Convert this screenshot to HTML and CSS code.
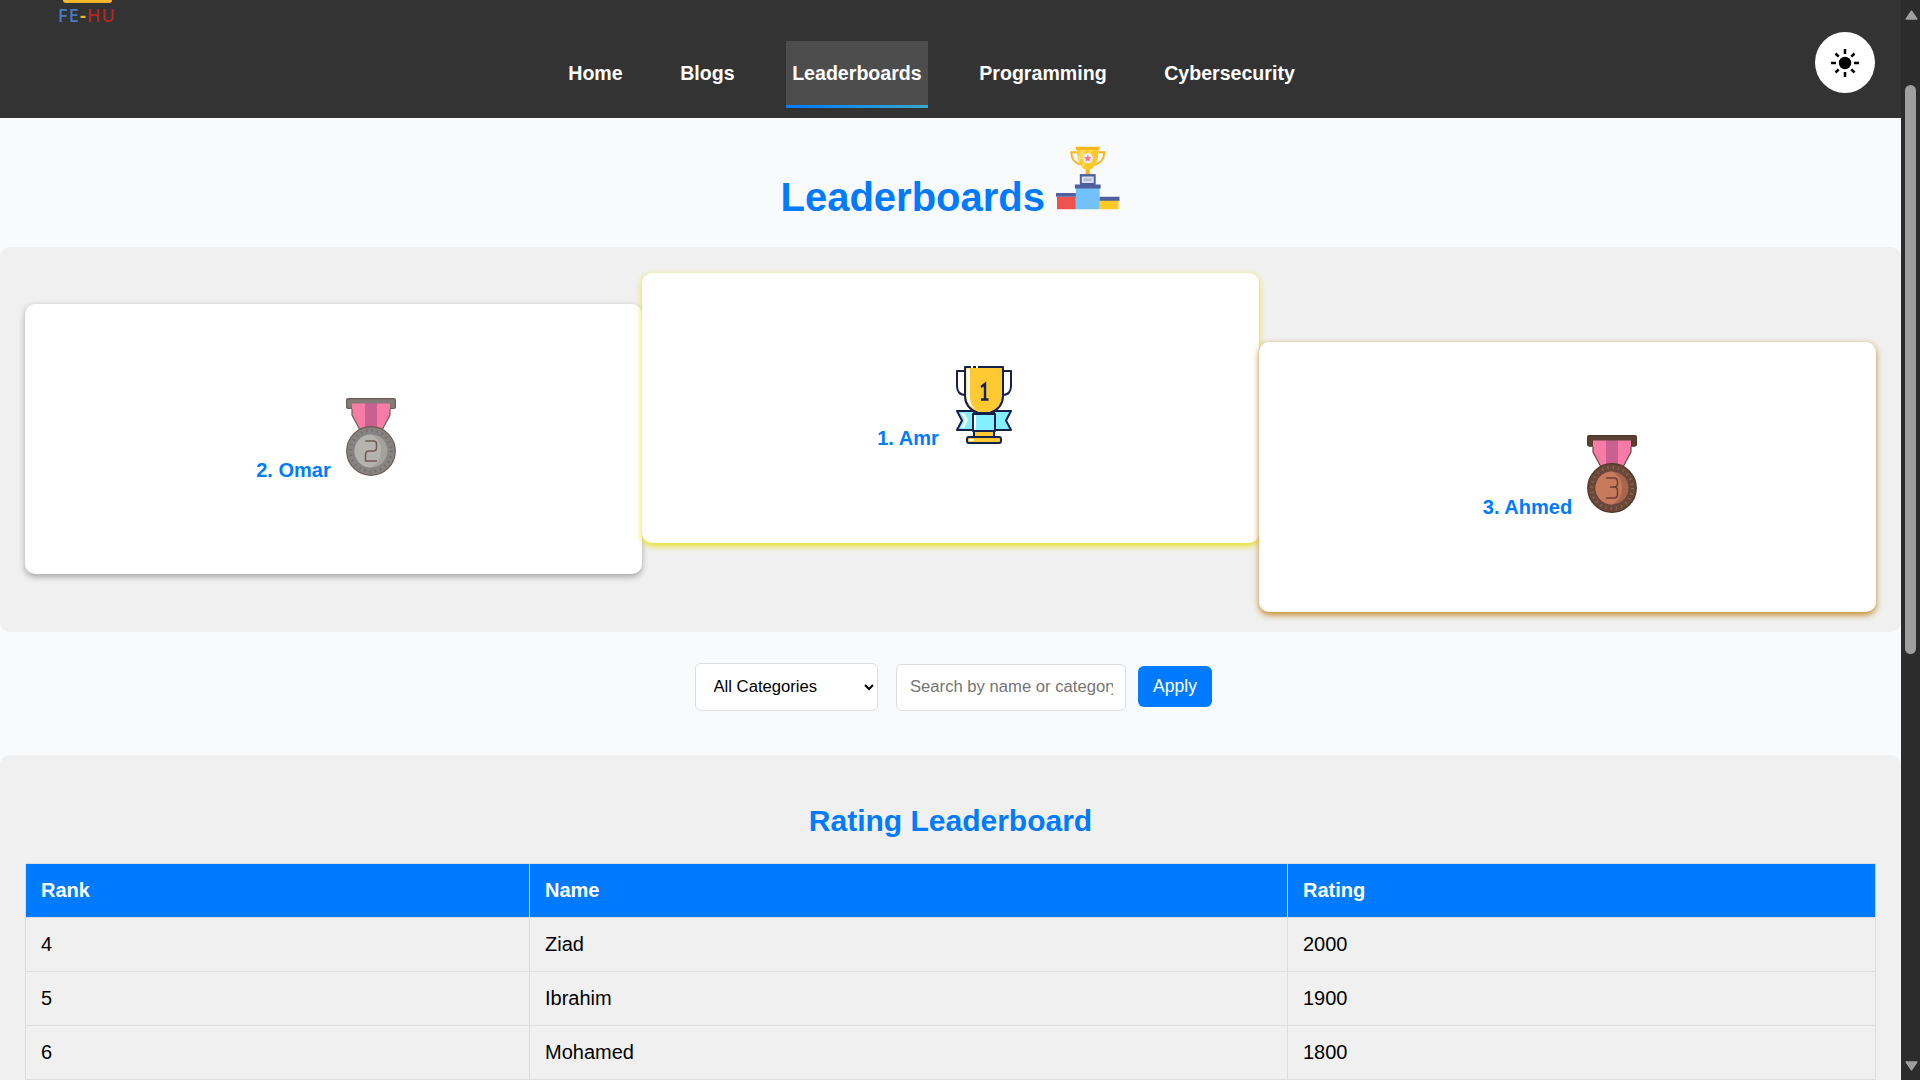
FILE: index.html
```html
<!DOCTYPE html>
<html lang="en">
<head>
<meta charset="utf-8">
<title>Leaderboards</title>
<link rel="stylesheet" href="styles.css">
</head>
<body>
<div class="page">
  <header class="header">
    <a class="logo"><span class="logo-bar"></span><span class="logo-text"><span class="logo-fe">FE</span><span class="logo-dash">-</span><span class="logo-hu">HU</span></span></a>
    <nav class="nav">
      <a class="nav-link">Home</a>
      <a class="nav-link">Blogs</a>
      <a class="nav-link active">Leaderboards</a>
      <a class="nav-link">Programming</a>
      <a class="nav-link">Cybersecurity</a>
    </nav>
    <button class="theme" aria-label="Theme">
      <svg width="30" height="30" viewBox="0 0 30 30"><circle cx="15" cy="15" r="6.2"/><g stroke="#000" stroke-width="2.5"><path d="M15 1v5M15 24v5M1 15h5M24 15h5M5.5 5.5l3.2 3.2M21.3 21.3l3.2 3.2M5.5 24.5l3.2-3.2M21.3 8.7l3.2-3.2"/></g></svg>
    </button>
  </header>

  <h1 class="title"><span>Leaderboards</span>
    <svg class="title-icon" width="63.5" height="64" viewBox="0 0 64 64">
      <path d="M21 6h-5.500c0 7 4 11.500 9.500 12.500M43 6h5.500c0 7-4 11.500-9.500 12.500" fill="none" stroke="#fbb41a" stroke-width="2"/>
      <path d="M30 23h4v6h-4z" fill="#fbb41a"/>
      <path d="M21 2h22c0 10-2 18-9 22h-4c-7-4-9-12-9-22z" fill="#ffc928"/>
      <path d="M26 2h5l-7 14-2-5zM38 2l-11 20-2-2L35 2z" fill="#ffdc62"/>
      <path d="M20 .5h24v3H20z" fill="#fbb41a"/>
      <circle cx="32" cy="12" r="5.200" fill="#eeeafa"/>
      <path d="M32 8.500l1.100 2.300 2.500.3-1.800 1.800.4 2.500-2.200-1.200-2.200 1.200.4-2.500-1.800-1.800 2.500-.3z" fill="#f47a82"/>
      <path d="M24 28h16v12H24z" fill="#505f9e"/><path d="M26 30.500h12v6.500H26z" fill="#dcdff5"/><path d="M28 32.500h8v2.500h-8z" fill="#aeb6e0"/>
      <path d="M1 51h19v12.500H1z" fill="#f0524d"/><path d="M44 54h19v9.500H44z" fill="#ffc928"/><path d="M20 41h24v22.500H20z" fill="#73c1fb"/>
      <path d="M0 47h20v4H0zM44 51h20v4H44zM19 38.500h26v4H19z" fill="#505f9e"/>
    </svg>
  </h1>

  <section class="podium">
    <article class="card second"><span>2. Omar</span>
      <svg width="50" height="78" viewBox="0 0 50 78">
        <path d="M6 5h38v12l-9 17H15L6 17z" fill="#f67ca6" stroke="#6d5a55" stroke-width="1.200"/>
        <path d="M19 5h12v26H19z" fill="#c9608f"/>
        <rect x=".6" y=".6" width="48.800" height="9.800" rx="1.500" fill="#827b78" stroke="#6d5a55" stroke-width="1.200"/>
        <path d="M6 5.500h13V11H6zM31 5.500h13V11H31z" fill="#f67ca6"/><path d="M19 5.500h12V11H19z" fill="#c9608f"/>
        <circle cx="25" cy="53" r="24.300" fill="#858482" stroke="#6d5a55" stroke-width="1.200"/>
        <circle cx="25" cy="53" r="20.500" fill="none" stroke="#6f6d6b" stroke-width="3" stroke-dasharray="1.200 4.167"/>
        <circle cx="25" cy="53" r="16.500" fill="#a3a29d"/><path d="M25 36.500a16.500 16.500 0 0 0 0 33q10-5 10-16.500t-10-16.500z" fill="#b4b3af"/>
        <path d="M19.500 43h8q3 0 3 3v4q0 3-3 3h-4q-4 0-4 4v6h11.500" fill="none" stroke="#705a51" stroke-width="1.500"/>
      </svg>
    </article>
    <article class="card first"><span>1. Amr</span>
      <svg width="56" height="78" viewBox="0 0 56 78">
        <g stroke="#15214d" stroke-width="2" stroke-linejoin="round">
          <path d="M9 5H1v15q0 9 9 9M47 5h8v15q0 9-9 9" fill="#fff"/>
          <path d="M1 45h17v19H1l5-9.500zM55 45H38v19h17l-5-9.500z" fill="#83efff"/>
          <path d="M9 1h38v29q0 12-13 17H22Q9 42 9 30z" fill="#ffc934"/>
          <path d="M17 48h22v17H17z" fill="#83efff"/>
          <path d="M18 65h20v7H18z" fill="#ffc934"/><rect x="11" y="71" width="34" height="6" rx="2" fill="#ffc934"/>
        </g>
        <path d="M10.500 2.500H14V31q0 8 6 13-9.500-5-9.500-14zM18 49h2v15h-2zM13 73h5v2h-5zM5 47h3l4 7-4 8H5l4-7.500z" fill="#fff"/>
        <path d="M15 0h2v2h-2zM20 0h2v2h-2z" fill="#fff"/>
        <path d="M25 21l4-3v15M25 33.500h7.500" fill="none" stroke="#15214d" stroke-width="2.400"/>
      </svg>
    </article>
    <article class="card third"><span>3. Ahmed</span>
      <svg width="50" height="78" viewBox="0 0 50 78">
        <path d="M6 5h38v12l-9 17H15L6 17z" fill="#f67ca6" stroke="#67483c" stroke-width="1.200"/>
        <path d="M19 5h12v26H19z" fill="#c9608f"/>
        <rect x=".6" y=".6" width="48.800" height="10.500" rx="1.500" fill="#5c4033" stroke="#513629" stroke-width="1.200"/>
        <path d="M6 5.500h13V12H6zM31 5.500h13V12H31z" fill="#f67ca6"/><path d="M19 5.500h12V12H19z" fill="#c9608f"/>
        <circle cx="25" cy="53" r="24.300" fill="#69483a" stroke="#513629" stroke-width="1.200"/>
        <circle cx="25" cy="53" r="20.500" fill="none" stroke="#8b6758" stroke-width="3" stroke-dasharray="1.200 4.167"/>
        <circle cx="25" cy="53" r="16.500" fill="#a9664e"/><path d="M25 36.500a16.500 16.500 0 0 0 0 33q10-5 10-16.500t-10-16.500z" fill="#c77a5c"/>
        <path d="M19 43h8q3.500 0 3.500 3.500v2.500q0 3-3.500 3h-4 4q3.500 0 3.500 3.500v4q0 3.500-3.500 3.500h-8" fill="none" stroke="#67412f" stroke-width="1.500"/>
      </svg>
    </article>
  </section>

  <form class="filters">
    <select class="category"><option>All Categories</option></select>
    <input class="search" type="text" placeholder="Search by name or category">
    <button class="apply" type="button">Apply</button>
  </form>

  <section class="ratings">
    <h2 class="subtitle">Rating Leaderboard</h2>
    <table class="table">
      <colgroup><col class="col-rank"><col class="col-name"><col class="col-rating"></colgroup>
      <thead><tr><th>Rank</th><th>Name</th><th>Rating</th></tr></thead>
      <tbody>
        <tr><td>4</td><td>Ziad</td><td>2000</td></tr>
        <tr><td>5</td><td>Ibrahim</td><td>1900</td></tr>
        <tr><td>6</td><td>Mohamed</td><td>1800</td></tr>
      </tbody>
    </table>
  </section>
</div>
<aside class="scrollbar">
  <svg width="13" height="10" viewBox="0 0 13 10"><path d="M6.500 1.200L11.800 9H1.200z"/></svg>
  <div class="thumb"></div>
  <svg class="down" width="13" height="10" viewBox="0 0 13 10"><path d="M6.500 8.800L11.800 1H1.200z"/></svg>
</aside>
</body>
</html>
```
FILE: styles.css
```css
* { box-sizing: border-box; }
body {
  margin: 0;
  height: 1080px;
  overflow: hidden;
  display: flex;
  background: #f8fafc;
  color: #000;
  font: 20px "Liberation Sans", Arial, sans-serif;
}
.page { width: 1901px; height: 1080px; overflow: hidden; }

.header {
  height: 118px;
  display: grid;
  grid-template-columns: 562px auto 1fr;
  align-items: start;
  background: #333;
}
.logo { width: 59px; margin-left: 58px; display: flex; flex-direction: column; }
.logo-bar { width: 49px; height: 3px; margin-left: 5px; background: #fbb62c; border-radius: 0 0 3px 3px; }
.logo-text { margin-top: 2px; font: 500 18px/20px "Noto Sans", sans-serif; letter-spacing: 1.2px; white-space: nowrap; }
.logo-fe { color: #4a7cc2; }
.logo-dash { color: #f5b125; font-weight: 700; }
.logo-hu { color: #b02a20; }
.nav { display: flex; gap: 45px; padding-top: 41px; }
.nav-link {
  height: 67px;
  padding: 0 6.25px;
  line-height: 64px;
  font-size: 19.6px;
  font-weight: 700;
  color: #fff;
}
.nav-link.active {
  background: linear-gradient(90deg, #007bff, #36a9cb) bottom / 100% 3px no-repeat #4d4d4d;
}
.theme {
  justify-self: end;
  width: 60px;
  height: 61px;
  margin: 32px 26px 0 0;
  padding: 0;
  border: 0;
  border-radius: 50%;
  background: #fff;
  display: flex;
  align-items: center;
  justify-content: center;
}

.title {
  height: 129px;
  margin: 0;
  padding: 28px 1px 0 0;
  display: flex;
  justify-content: center;
  gap: 11px;
  color: #007bff;
  font-size: 40px;
  line-height: 46px;
}
.title span { padding-top: 28px; }

.podium {
  height: 385px;
  padding: 26px 25px 0;
  display: grid;
  grid-template-columns: repeat(3, 1fr);
  align-items: start;
  background: #f0f0f0;
  border-radius: 10px;
}
.card {
  height: 270px;
  padding: 93px 15px 0 0;
  display: flex;
  justify-content: center;
  gap: 15px;
  background: #fff;
  border-radius: 10px;
  color: #007bff;
  font-weight: 700;
}
.card span { padding-top: 61px; line-height: 23px; }
.second { margin-top: 31px; padding-top: 94px; box-shadow: 0 2.5px 6px rgba(0, 0, 0, .3); }
.first { padding-right: 12px; gap: 17px; box-shadow: 0 2.5px 6px #e8df20; }
.third { margin-top: 69px; box-shadow: 0 2.5px 6px #c48a28; }

.filters {
  height: 123px;
  display: flex;
  align-items: flex-start;
  padding: 31px 0 0 695px;
}
.filters > * { font: 16.65px "Liberation Sans", Arial, sans-serif; border-radius: 6px; }
.category { width: 183px; height: 48px; padding: 0 0 2px 13.500px; border: 1px solid #ddd; background: #fff; color: #000; }
.search { width: 230px; height: 47px; margin: 1px 12px 0 18px; padding: 0 12.500px 2px 13px; border: 1px solid #ddd; background: #fff; }
.search::placeholder { color: #757575; }
.filters .apply { width: 74px; height: 41px; margin-top: 3px; padding: 0; border: 0; background: #007bff; color: #fff; font-size: 17.500px; }

.ratings {
  height: 420px;
  padding: 48px 25px 0;
  background: #f0f0f0;
  border-radius: 10px;
}
.subtitle { margin: 0 0 25px; color: #007bff; font-size: 30px; line-height: 35px; text-align: center; }
.table { width: 1851px; table-layout: fixed; border-collapse: collapse; }
.col-rank { width: 504px; }
.col-name { width: 758px; }
.table th, .table td { height: 54px; padding: 0 15px; border: 1px solid #ddd; text-align: left; }
.table th { background: #007bff; color: #fff; }

.scrollbar { width: 19px; padding-top: 10px; background: #2c2c2c; display: flex; flex-direction: column; align-items: center; }
.scrollbar svg { fill: #9f9f9f; stroke: #9f9f9f; stroke-width: 1.500; stroke-linejoin: round; flex: none; margin-left: 1px; }
.thumb { width: 11px; height: 569px; margin-top: 65px; border-radius: 6px; background: #9f9f9f; }
.scrollbar .down { margin-top: auto; margin-bottom: 9px; }
```
